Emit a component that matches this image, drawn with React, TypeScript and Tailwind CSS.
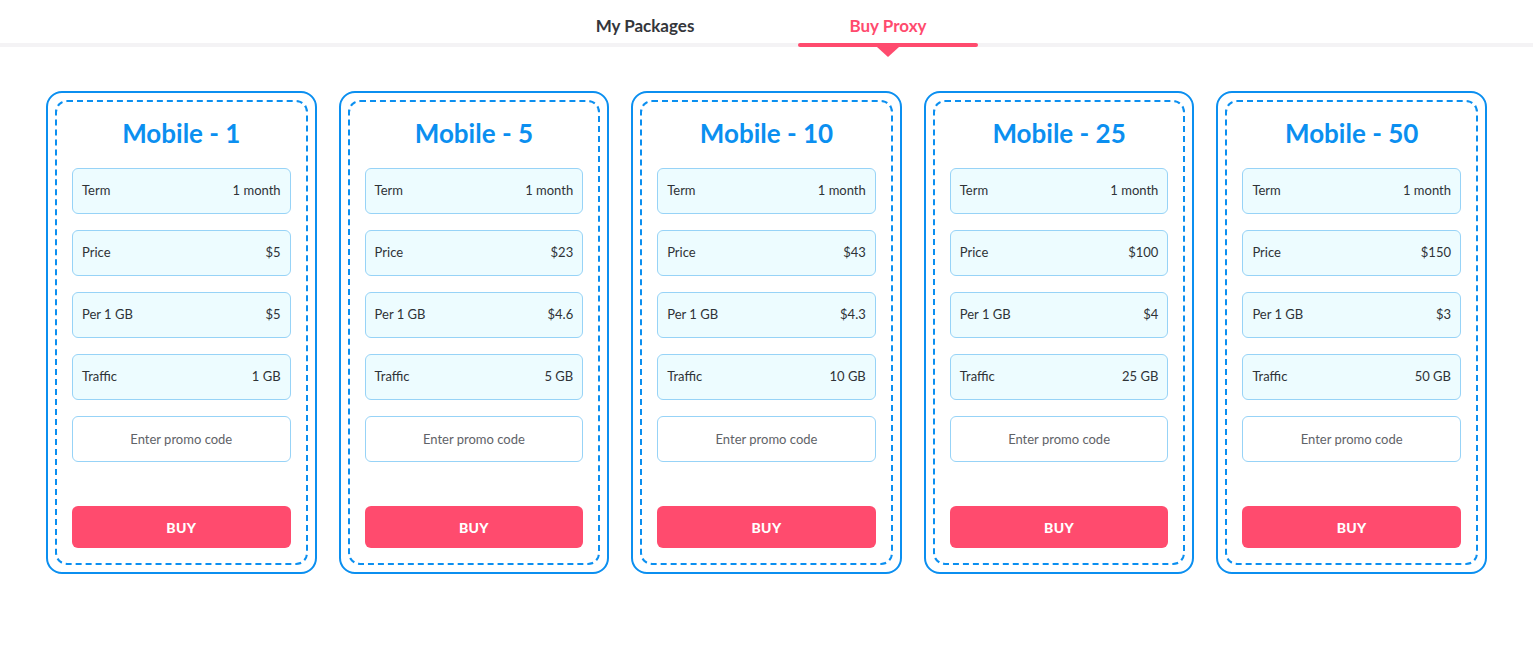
import React from 'react';

type Pack = {
  name: string;
  price: string;
  perGb: string;
  traffic: string;
};

const packs: Pack[] = [
  { name: 'Mobile - 1', price: '$5', perGb: '$5', traffic: '1 GB' },
  { name: 'Mobile - 5', price: '$23', perGb: '$4.6', traffic: '5 GB' },
  { name: 'Mobile - 10', price: '$43', perGb: '$4.3', traffic: '10 GB' },
  { name: 'Mobile - 25', price: '$100', perGb: '$4', traffic: '25 GB' },
  { name: 'Mobile - 50', price: '$150', perGb: '$3', traffic: '50 GB' },
];

function Row({ label, value }: { label: string; value: string }) {
  return (
    <div className="flex h-[46px] items-center justify-between rounded-[6px] border border-[#97d3f7] bg-[#edfcff] px-[9px] text-[13px] text-[#2f3337]">
      <span>{label}</span>
      <span>{value}</span>
    </div>
  );
}

function PackCard({ pack }: { pack: Pack }) {
  return (
    <div className="flex-1 rounded-[16px] border-2 border-[#0b8ff0] p-[7px]">
      <div className="flex flex-col rounded-[12px] border-2 border-dashed border-[#0b8ff0] px-[15px] pt-[15px] pb-[15px]">
        <h2 className="mb-[19px] text-center text-[26px] font-bold leading-[32px] text-[#0b8ff0]">
          {pack.name}
        </h2>
        <div className="flex flex-col gap-[16px]">
          <Row label="Term" value="1 month" />
          <Row label="Price" value={pack.price} />
          <Row label="Per 1 GB" value={pack.perGb} />
          <Row label="Traffic" value={pack.traffic} />
          <input
            type="text"
            placeholder="Enter promo code"
            className="h-[46px] w-full rounded-[6px] border border-[#97d3f7] bg-white text-center text-[13px] text-[#333] outline-none placeholder:text-[#5f6368]"
          />
        </div>
        <button className="mt-[44px] h-[42px] w-full rounded-[6px] bg-[#ff4b6e] text-[14px] font-black tracking-wide text-white">
          BUY
        </button>
      </div>
    </div>
  );
}

export default function App() {
  return (
    <div className="min-h-screen bg-white font-['Lato',_'Open_Sans',_sans-serif]">
      <div className="flex justify-center gap-[63px] border-b-4 border-[#f4f3f5]">
        <button className="relative h-[43px] w-[180px] pt-[9px] text-center text-[17px] font-bold leading-[24px] text-[#34363b]">
          My Packages
        </button>
        <button className="relative h-[43px] w-[180px] pt-[9px] text-center text-[17px] font-bold leading-[24px] text-[#ff4b6e]">
          Buy Proxy
          <span className="absolute -bottom-[4px] left-0 h-[4px] w-full rounded-full bg-[#ff4b6e]" />
          <span className="absolute -bottom-[14px] left-1/2 h-0 w-0 -translate-x-1/2 border-x-[11px] border-t-[10px] border-x-transparent border-t-[#ff4b6e]" />
        </button>
      </div>

      <div className="mt-[44px] flex gap-[22px] px-[46px]">
        {packs.map((p) => (
          <PackCard key={p.name} pack={p} />
        ))}
      </div>
    </div>
  );
}
